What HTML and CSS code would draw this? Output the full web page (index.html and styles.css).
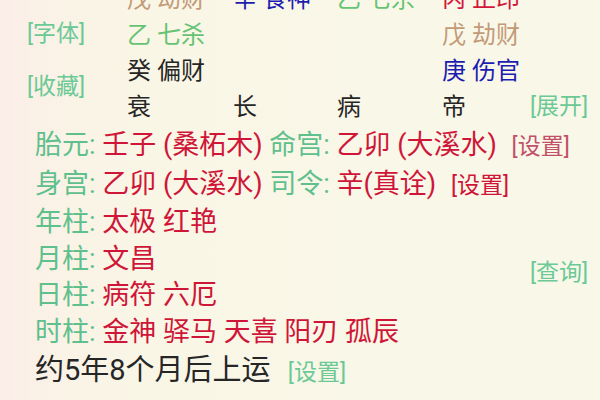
FILE: index.html
```html
<!DOCTYPE html>
<html lang="zh-CN">
<head>
<meta charset="utf-8">
<title>排盘</title>
<link rel="stylesheet" href="styles.css">
</head>
<body>
<div class="page">
  <section class="chart">
    <div class="side">
      <span class="link">[字体]</span>
      <span class="link">[收藏]</span>
    </div>
    <div class="grid">
      <span class="tan">戊 劫财</span>
      <span class="blue">辛 食神</span>
      <span class="green">乙 七杀</span>
      <span class="red">丙 正印</span>
      <span></span>

      <span class="green">乙 七杀</span>
      <span></span>
      <span></span>
      <span class="tan">戊 劫财</span>
      <span></span>

      <span class="dark">癸 偏财</span>
      <span></span>
      <span></span>
      <span class="blue">庚 伤官</span>
      <span></span>

      <span class="dark">衰</span>
      <span class="dark">长</span>
      <span class="dark">病</span>
      <span class="dark">帝</span>
      <span class="link">[展开]</span>
    </div>
  </section>

  <section class="info">
    <div class="lines">
      <p class="line"><span class="lbl">胎元:</span> <span class="val">壬子 (桑柘木)</span> <span class="lbl">命宫:</span> <span class="val">乙卯 (大溪水)</span> <span class="set faded">[设置]</span></p>
      <p class="line"><span class="lbl">身宫:</span> <span class="val">乙卯 (大溪水)</span> <span class="lbl">司令:</span> <span class="val">辛(真诠)</span> <span class="set">[设置]</span></p>
      <p class="line"><span class="lbl">年柱:</span> <span class="val">太极 红艳</span></p>
      <p class="line"><span class="lbl">月柱:</span> <span class="val">文昌</span></p>
      <p class="line"><span class="lbl">日柱:</span> <span class="val">病符 六厄</span></p>
      <p class="line"><span class="lbl">时柱:</span> <span class="val">金神 驿马 天喜 阳刃 孤辰</span></p>
      <p class="line luck"><span class="dark">约5年8个月后上运</span> <span class="link">[设置]</span></p>
    </div>
    <div class="aside">
      <span class="link">[查询]</span>
    </div>
  </section>
</div>
</body>
</html>
```

FILE: styles.css
```css
* { box-sizing: border-box; }

html, body {
  margin: 0;
  padding: 0;
  height: 100%;
}

body {
  background: linear-gradient(to right, #fbede8 0px, #faf2e6 50px, #f9f6e6 140px, #f9f8e8 100%);
  font-family: Roboto, "Noto Sans CJK SC", sans-serif;
  overflow: hidden;
}

.page {
  width: 600px;
  height: 400px;
  overflow: hidden;
}

.chart {
  display: flex;
  margin-top: -19px;
}

.side {
  width: 100px;
  margin-left: 27px;
  padding-top: 35px;
  display: flex;
  flex-direction: column;
  gap: 17px;
}

.side .link {
  line-height: 36px;
}

.grid {
  display: grid;
  grid-template-columns: 106px 104px 105px 88px auto;
  grid-auto-rows: 36px;
  font-size: 24px;
  line-height: 36px;
  white-space: nowrap;
}

.link {
  color: #6bc996;
  font-size: 23px;
  white-space: nowrap;
}

.tan { color: #c39a78; }
.blue { color: #1d1cb0; }
.green { color: #67c374; }
.red { color: #d3173a; }
.dark { color: #262626; }

.info {
  display: flex;
  margin-top: 2px;
}

.lines {
  flex: 0 0 530px;
  min-width: 0;
  padding-left: 35px;
}

.line {
  margin: 0;
  font-size: 27px;
  line-height: 36.6px;
  white-space: nowrap;
}

.lbl { color: #5fbf8d; }
.val { color: #cf1638; }

.set {
  color: #cf1638;
  font-size: 23px;
  margin-left: 8px;
}

.set.faded { color: #c2506a; }

.line.luck {
  font-size: 29px;
  margin-top: 1px;
}

.line.luck .link {
  margin-left: 10px;
}

.aside {
  flex: 0 0 70px;
  padding-top: 128px;
  line-height: 36px;
}
```
